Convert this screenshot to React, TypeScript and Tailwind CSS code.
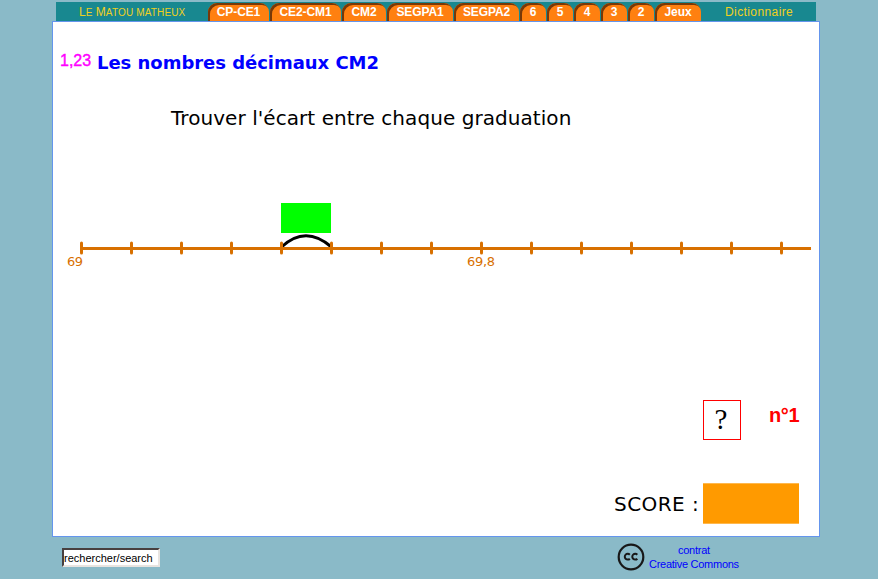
const tabs = [
  { label: 'CP-CE1', width: 'w-[61px]' },
  { label: 'CE2-CM1', width: 'w-[71px]' },
  { label: 'CM2', width: 'w-[44px]' },
  { label: 'SEGPA1', width: 'w-[66px]' },
  { label: 'SEGPA2', width: 'w-[65px]' },
  { label: '6', width: 'w-[26px]' },
  { label: '5', width: 'w-[26px]' },
  { label: '4', width: 'w-[26px]' },
  { label: '3', width: 'w-[26px]' },
  { label: '2', width: 'w-[26px]' },
  { label: 'Jeux', width: 'w-[46px]' },
];

function Navigation() {
  return (
    <nav className="mx-[4px] flex h-[19px] bg-[#188890] font-['Liberation_Sans',Arial,sans-serif] text-[12px] leading-[14px]">
      <a className="w-[152px] pt-[3px] pl-[23px] whitespace-nowrap text-[#f0d020] uppercase">
        L<span className="text-[10px] tracking-[0.150px]">e</span> M
        <span className="text-[10px] tracking-[0.150px]">atou matheux</span>
      </a>
      <div className="flex gap-x-[1px] pt-[1px]">
        {tabs.map((tab) => (
          <a
            key={tab.label}
            className={`${tab.width} flex h-[18px] justify-center rounded-t-[9px] bg-[#ff8010] pt-[2px] text-center font-bold tracking-[-0.100px] whitespace-nowrap text-white shadow-[inset_2px_2px_0_#783808]`}
          >
            {tab.label}
          </a>
        ))}
      </div>
      <a className="ml-[24px] pt-[3px] tracking-[0.400px] text-[#f0d020]">Dictionnaire</a>
    </nav>
  );
}

function NumberLine() {
  const ticks = Array.from({ length: 15 }, (_, i) => 28.5 + i * 50);
  return (
    <svg className="mt-[67px] block" width="766" height="76" viewBox="0 0 766 76">
      <rect x="228" y="6" width="50" height="30" fill="#00ff00" />
      <path d="M228.500 50 Q252.500 27.500 278.500 50" fill="none" stroke="#000" strokeWidth="3" />
      <path d="M27.500 51.500H758" stroke="#d87000" strokeWidth="3" />
      {ticks.map((x) => (
        <path key={x} d={`M${x} 46V56`} stroke="#d87000" strokeWidth="3" strokeLinecap="round" />
      ))}
      <g fill="#d87000" fontFamily="DejaVu Sans, Verdana, sans-serif" fontSize="13">
        <text x="14" y="69" textLength="16">69</text>
        <text x="414" y="69" textLength="28">69,8</text>
      </g>
    </svg>
  );
}

function CreativeCommons() {
  return (
    <svg className="shrink-0" width="28" height="28" viewBox="0 0 28 28" fill="none" stroke="#181818">
      <circle cx="14" cy="14" r="12.300" strokeWidth="2.200" />
      <path
        d="M12.800 11.700A2.900 2.900 0 1 0 12.800 15.700M20.300 11.700A2.900 2.900 0 1 0 20.300 15.700"
        strokeWidth="2"
      />
    </svg>
  );
}

export default function App() {
  return (
    <div className="h-[579px] w-[878px] overflow-hidden bg-[#8abac8] pt-[2px] pl-[52px]">
      <div className="w-[768px]">
        <Navigation />
        <main className="flex h-[516px] flex-col border border-[#6495ed] bg-white font-['DejaVu_Sans',Verdana,sans-serif]">
          <h1 className="mt-[29px] flex h-[24px] items-center whitespace-nowrap">
            <span className="-mt-[4px] ml-[7px] w-[37px] font-['Liberation_Sans',Arial,sans-serif] text-[16px] leading-[20px] text-[#ff00ff] [-webkit-text-stroke:0.4px_#ff00ff]">
              1,23
            </span>
            <span className="text-[18px] leading-[24px] font-bold tracking-[-0.030px] text-[#0000ff]">
              Les nombres décimaux CM2
            </span>
          </h1>
          <p className="mt-[31px] ml-[118px] h-[24px] text-[20px] leading-[24px] tracking-[0.060px] whitespace-nowrap text-black">
            Trouver l'écart entre chaque graduation
          </p>
          <NumberLine />
          <div className="mt-[127px] ml-[650px] flex">
            <button className="h-[40px] w-[38px] shrink-0 border border-[#ff0000] pr-[2px] pb-[3px] font-['Liberation_Serif',serif] text-[29px] leading-[34px] text-black">
              ?
            </button>
            <strong className="mt-[4px] ml-[28px] font-['Liberation_Sans',Arial,sans-serif] text-[20px] leading-[23px] tracking-[-0.400px] text-[#ff0000]">
              n°1
            </strong>
          </div>
          <div className="mt-[43px] ml-[561px] flex">
            <span className="mt-[9px] w-[89px] text-[20px] leading-[24px] tracking-[0.450px] whitespace-nowrap text-black">
              SCORE :
            </span>
            <div className="h-[41px] w-[96px] border-y border-[#ffb84d] bg-[#ff9a00]" />
          </div>
        </main>
        <footer className="flex font-['Liberation_Sans',Arial,sans-serif]">
          <input
            className="mt-[11px] ml-[10px] h-[19px] w-[98px] border-2 border-t-[#484040] border-r-[#e8e4e0] border-b-[#e8e4e0] border-l-[#484040] bg-white p-0 text-[11px] leading-[15px] text-black"
            defaultValue="rechercher/search"
          />
          <div className="mt-[6px] ml-[457px]">
            <CreativeCommons />
          </div>
          <p className="mt-[6px] ml-[4px] text-center text-[11px] leading-[14px] tracking-[-0.270px] whitespace-nowrap text-[#0000ff]">
            contrat
            <br />
            Creative Commons
          </p>
        </footer>
      </div>
    </div>
  );
}
